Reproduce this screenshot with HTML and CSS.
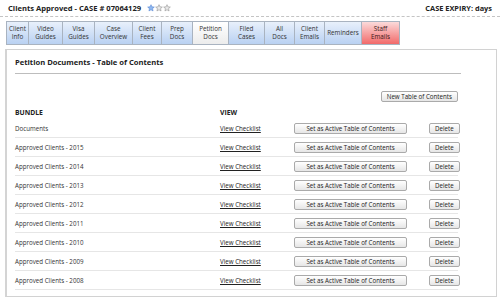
FILE: index.html
```html
<!DOCTYPE html>
<html lang="en">
<head>
    <meta charset="UTF-8">
    <title>Clients Approved - Petition Docs</title>
    <link rel="stylesheet" href="styles.css">
</head>
<body>
    <header class="case-header">
        <h1 class="case-title">Clients Approved - CASE # 07064129
            <span class="stars">
                <svg viewBox="0 0 24 24" class="star star-on"><path d="M12 2l2.9 6.6 7.1.6-5.4 4.7 1.6 7L12 17.3 5.8 20.9l1.6-7L2 9.2l7.1-.6z"/></svg>
                <svg viewBox="0 0 24 24" class="star"><path d="M12 2l2.9 6.6 7.1.6-5.4 4.7 1.6 7L12 17.3 5.8 20.9l1.6-7L2 9.2l7.1-.6z"/></svg>
                <svg viewBox="0 0 24 24" class="star"><path d="M12 2l2.9 6.6 7.1.6-5.4 4.7 1.6 7L12 17.3 5.8 20.9l1.6-7L2 9.2l7.1-.6z"/></svg>
            </span>
        </h1>
        <div class="case-expiry">CASE EXPIRY: days</div>
    </header>

    <nav class="tabs">
        <a class="tab" style="width:23px">Client<br>Info</a>
        <a class="tab" style="width:34px">Video<br>Guides</a>
        <a class="tab" style="width:32px">Visa<br>Guides</a>
        <a class="tab" style="width:38px">Case<br>Overview</a>
        <a class="tab" style="width:29px">Client<br>Fees</a>
        <a class="tab" style="width:31px">Prep<br>Docs</a>
        <a class="tab tab-active" style="width:36px">Petition<br>Docs</a>
        <a class="tab" style="width:36px">Filed<br>Cases</a>
        <a class="tab" style="width:30px">All<br>Docs</a>
        <a class="tab" style="width:30px">Client<br>Emails</a>
        <a class="tab" style="width:37px">Reminders</a>
        <a class="tab tab-staff" style="width:38px">Staff<br>Emails</a>
    </nav>

    <main class="panel">
        <h2 class="panel-title">Petition Documents - Table of Contents</h2>

        <div class="toolbar">
            <button class="btn">New Table of Contents</button>
        </div>

        <div class="toc-table">
            <div class="toc-row toc-head">
                <span>BUNDLE</span>
                <span>VIEW</span>
                <span></span>
                <span></span>
            </div>
            <div class="toc-row">
                <span>Documents</span>
                <a href="#">View Checklist</a>
                <button class="btn btn-wide">Set as Active Table of Contents</button>
                <button class="btn">Delete</button>
            </div>
            <div class="toc-row">
                <span>Approved Clients - 2015</span>
                <a href="#">View Checklist</a>
                <button class="btn btn-wide">Set as Active Table of Contents</button>
                <button class="btn">Delete</button>
            </div>
            <div class="toc-row">
                <span>Approved Clients - 2014</span>
                <a href="#">View Checklist</a>
                <button class="btn btn-wide">Set as Active Table of Contents</button>
                <button class="btn">Delete</button>
            </div>
            <div class="toc-row">
                <span>Approved Clients - 2013</span>
                <a href="#">View Checklist</a>
                <button class="btn btn-wide">Set as Active Table of Contents</button>
                <button class="btn">Delete</button>
            </div>
            <div class="toc-row">
                <span>Approved Clients - 2012</span>
                <a href="#">View Checklist</a>
                <button class="btn btn-wide">Set as Active Table of Contents</button>
                <button class="btn">Delete</button>
            </div>
            <div class="toc-row">
                <span>Approved Clients - 2011</span>
                <a href="#">View Checklist</a>
                <button class="btn btn-wide">Set as Active Table of Contents</button>
                <button class="btn">Delete</button>
            </div>
            <div class="toc-row">
                <span>Approved Clients - 2010</span>
                <a href="#">View Checklist</a>
                <button class="btn btn-wide">Set as Active Table of Contents</button>
                <button class="btn">Delete</button>
            </div>
            <div class="toc-row">
                <span>Approved Clients - 2009</span>
                <a href="#">View Checklist</a>
                <button class="btn btn-wide">Set as Active Table of Contents</button>
                <button class="btn">Delete</button>
            </div>
            <div class="toc-row">
                <span>Approved Clients - 2008</span>
                <a href="#">View Checklist</a>
                <button class="btn btn-wide">Set as Active Table of Contents</button>
                <button class="btn">Delete</button>
            </div>
        </div>
    </main>
</body>
</html>
```

FILE: styles.css
```css
body {
    font-family: "Open Sans", "DejaVu Sans", sans-serif;
    margin: 0;
    padding: 0;
    background-color: #fff;
    color: #333;
}
.case-header {
    display: flex;
    justify-content: space-between;
    align-items: center;
    height: 17px;
    padding: 0 8px;
    border-bottom: 1px dashed #c4c4c4;
    box-sizing: border-box;
}
.case-title {
    margin: 0;
    font-size: 7.6px;
    font-weight: bold;
    color: #222;
    display: flex;
    align-items: center;
}
.case-expiry {
    font-size: 7.4px;
    font-weight: bold;
    color: #222;
}
.stars {
    display: inline-flex;
    margin-left: 6px;
    gap: 0;
}
.star {
    width: 8px;
    height: 8px;
    fill: #e8e8e8;
    stroke: #8a8a8a;
    stroke-width: 1.6;
}
.star-on {
    fill: #8fb8f0;
    stroke: #4d7fd0;
}
.tabs {
    display: flex;
    margin: 4px 0 0 6px;
}
.tab {
    display: flex;
    align-items: center;
    justify-content: center;
    height: 24px;
    box-sizing: border-box;
    border: 1px solid #a9b3c0;
    border-left: none;
    background: linear-gradient(#e8f0fb, #b9d1f2);
    font-size: 6.3px;
    line-height: 8px;
    text-align: center;
    color: #333;
    cursor: pointer;
}
.tab:first-child {
    border-left: 1px solid #a9b3c0;
}
.tab-active {
    background: linear-gradient(#ffffff, #ececec);
}
.tab-staff {
    background: linear-gradient(#fbdada, #f26a6a);
    color: #3a1a1a;
}
.panel {
    margin: 4px 3px 0 5px;
    height: 248px;
    box-sizing: border-box;
    border: 1px solid #d2d2d2;
    border-left: 2px solid #d4d4d4;
    padding: 0 0 0 8px;
}
.panel-title {
    margin: 0 35px 0 0;
    height: 24px;
    padding-top: 7px;
    box-sizing: border-box;
    font-size: 7.6px;
    font-weight: bold;
    color: #222;
    border-bottom: 1px solid #bdbdbd;
}
.toolbar {
    display: flex;
    justify-content: flex-end;
    margin-right: 38px;
    padding-top: 17px;
    height: 28px;
    box-sizing: border-box;
}
.btn {
    font-family: "Open Sans", "DejaVu Sans", sans-serif;
    font-size: 6.2px;
    height: 11px;
    line-height: 9px;
    padding: 0 5px;
    border: 1px solid #aaa;
    border-radius: 2px;
    background: linear-gradient(#ffffff, #e6e6e6);
    color: #222;
    cursor: pointer;
}
.btn-wide {
    width: 113px;
}
.toc-table {
    margin-right: 38px;
    margin-top: 3px;
}
.toc-row {
    display: grid;
    grid-template-columns: 205px 74px 135px auto;
    align-items: center;
    height: 19px;
    border-bottom: 1px solid #e6e6e6;
    box-sizing: border-box;
    font-size: 6.2px;
}
.toc-row .btn:last-child {
    justify-self: start;
}
.toc-row a {
    color: #222;
    text-decoration: underline;
}
.toc-head {
    height: 14px;
    border-bottom: none;
    font-weight: bold;
    font-size: 6.8px;
    color: #222;
}
```
